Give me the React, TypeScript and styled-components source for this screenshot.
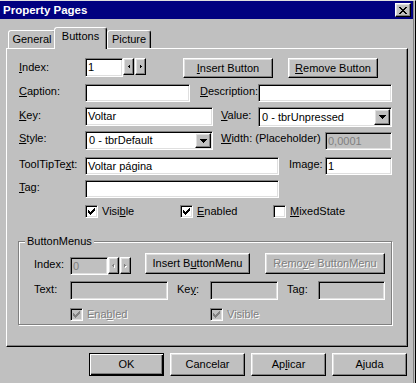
import styled, { createGlobalStyle, css } from 'styled-components';

const GlobalStyle = createGlobalStyle`
  html, body {
    margin: 0;
    padding: 0;
    background: #c0c0c0;
  }
  body {
    font-family: "Liberation Sans", Arial, sans-serif;
    font-size: 11px;
    line-height: 13px;
    color: #000;
  }
  *, *::before, *::after {
    box-sizing: border-box;
  }
  u {
    text-decoration: underline;
    text-underline-offset: 1px;
  }
`;

const raised = css`
  border: 1px solid;
  border-color: #fff #000 #000 #fff;
  box-shadow: inset -1px -1px 0 #808080, inset 1px 1px 0 #dfdfdf;
  background: #c0c0c0;
`;

const sunken = css`
  border: 1px solid;
  border-color: #808080 #fff #fff #808080;
  box-shadow: inset 1px 1px 0 #000, inset -1px -1px 0 #dfdfdf;
`;

const disabledText = css`
  color: #808080;
  text-shadow: 1px 1px 0 #fff;
`;

// pixel glyphs
const CLOSE_X =
  'M0 0h2v1H0zM6 0h2v1H6zM1 1h2v1H1zM5 1h2v1H5zM2 2h4v1H2zM3 3h2v1H3zM2 4h4v1H2zM1 5h2v1H1zM5 5h2v1H5zM0 6h2v1H0zM6 6h2v1H6z';
const CHECK =
  'M0 2h1v3H0zM1 3h1v3H1zM2 4h1v3H2zM3 3h1v3H3zM4 2h1v3H4zM5 1h1v3H5zM6 0h1v3H6z';
const DOWN = 'M0 0h7v1H0zM1 1h5v1H1zM2 2h3v1H2zM3 3h1v1H3z';
const LEFT = 'M1 0h1v3H1zM0 1h1v1H0z';
const RIGHT = 'M0 0h1v3H0zM1 1h1v1H1z';

const Glyph = ({ d, w, h, disabled }: { d: string; w: number; h: number; disabled?: boolean }) => (
	<svg width={w + (disabled ? 1 : 0)} height={h + (disabled ? 1 : 0)} shapeRendering="crispEdges">
		{disabled && <path d={d} fill="#fff" transform="translate(1 1)" />}
		<path d={d} fill={disabled ? '#808080' : '#000'} />
	</svg>
);

const Window = styled.div`
	width: 416px;
	height: 383px;
	background: #c0c0c0;
	border-top: 1px solid #dfdfdf;
	border-right: 1px solid #000;
	padding-right: 1px;
	overflow: hidden;
`;

const Frame = styled.div`
	height: 100%;
	border-right: 1px solid #808080;
`;

const TitleBar = styled.div`
	height: 18px;
	background: #000080;
	display: flex;
	align-items: center;
	justify-content: space-between;
	padding: 0 2px 0 3px;
`;

const Title = styled.span`
	color: #fff;
	font-weight: bold;
	font-size: 11.5px;
`;

const CloseButton = styled.button`
	${raised};
	width: 16px;
	height: 14px;
	padding: 0;
	display: flex;
	align-items: center;
	justify-content: center;
`;

const TabStrip = styled.div`
	display: flex;
	align-items: flex-end;
	height: 21px;
	margin-top: 8px;
	padding-left: 8px;
`;

const Tab = styled.div<{ $w: number; $active?: boolean }>`
	width: ${(p) => p.$w}px;
	height: 18px;
	border: 1px solid;
	border-bottom: none;
	border-color: #fff #000 transparent #fff;
	border-radius: 3px 3px 0 0;
	box-shadow: inset -1px 0 0 #808080;
	background: #c0c0c0;
	text-align: center;
	padding-top: 2px;
	flex-shrink: 0;
	${(p) =>
		p.$active &&
		css`
			height: 22px;
			margin: 0 0 -1px -2px;
			position: relative;
			z-index: 1;
		`}
`;

const Panel = styled.div`
	margin-left: 6px;
	width: 402px;
	height: 299px;
	border: 1px solid;
	border-color: #fff #000 #000 #fff;
	box-shadow: inset -1px -1px 0 #808080;
	padding: 9px 0 0 11px;
`;

const Row = styled.div<{ $mt: number; $h: number; $indent?: number }>`
	display: flex;
	align-items: flex-start;
	margin-top: ${(p) => p.$mt}px;
	height: ${(p) => p.$h}px;
	padding-left: ${(p) => p.$indent ?? 0}px;
`;

const Label = styled.span<{ $w: number; $ml?: number; $mt?: number }>`
	width: ${(p) => p.$w}px;
	margin-left: ${(p) => p.$ml ?? 0}px;
	margin-top: ${(p) => p.$mt ?? 0}px;
	padding: 1px 0 0 1px;
	flex-shrink: 0;
	white-space: nowrap;
`;

const TextBox = styled.div<{ $w: number; $h: number; $disabled?: boolean; $mt?: number }>`
	${sunken};
	width: ${(p) => p.$w}px;
	height: ${(p) => p.$h}px;
	margin-top: ${(p) => p.$mt ?? 0}px;
	flex-shrink: 0;
	background: ${(p) => (p.$disabled ? '#c0c0c0' : '#fff')};
	color: ${(p) => (p.$disabled ? '#808080' : '#000')};
	display: flex;
	align-items: center;
	padding-left: 2px;
	white-space: nowrap;
	overflow: hidden;
`;

const Combo = styled.div<{ $w: number; $h: number }>`
	${sunken};
	width: ${(p) => p.$w}px;
	height: ${(p) => p.$h}px;
	flex-shrink: 0;
	background: #fff;
	display: flex;
	align-items: center;
	padding-left: 3px;
	white-space: nowrap;
`;

const ComboText = styled.span`
	flex: 1;
`;

const DropButton = styled.span`
	${raised};
	width: 16px;
	align-self: stretch;
	margin: 1px;
	display: flex;
	align-items: center;
	justify-content: center;
`;

const Spins = styled.div<{ $mt?: number }>`
	display: flex;
	gap: 1px;
	margin-top: ${(p) => p.$mt ?? 0}px;
	flex-shrink: 0;
`;

const SpinButton = styled.span`
	${raised};
	width: 11px;
	height: 17px;
	display: flex;
	align-items: center;
	justify-content: center;
`;

const Button = styled.button<{ $w: number; $h: number; $ml?: number; $default?: boolean }>`
	${raised};
	width: ${(p) => p.$w}px;
	height: ${(p) => p.$h}px;
	margin-left: ${(p) => p.$ml ?? 0}px;
	padding: 0;
	font: inherit;
	color: #000;
	flex-shrink: 0;
	white-space: nowrap;
	&:disabled {
		${disabledText};
	}
	${(p) =>
		p.$default &&
		css`
			border-color: #000;
			box-shadow: inset 1px 1px 0 #fff, inset -1px -1px 0 #000, inset -2px -2px 0 #808080;
		`}
`;

const CheckItem = styled.span<{ $w?: number; $disabled?: boolean }>`
	display: flex;
	align-items: center;
	gap: 4px;
	height: 13px;
	width: ${(p) => (p.$w ? `${p.$w}px` : 'auto')};
	flex-shrink: 0;
	white-space: nowrap;
	${(p) => p.$disabled && disabledText};
`;

const CheckBox = styled.span<{ $disabled?: boolean }>`
	${sunken};
	width: 13px;
	height: 13px;
	flex-shrink: 0;
	display: flex;
	align-items: center;
	justify-content: center;
	background: ${(p) => (p.$disabled ? '#c0c0c0' : '#fff')};
	text-shadow: none;
`;

const GroupBox = styled.fieldset`
	margin: 17px 0 0 0;
	padding: 0;
	min-width: 0;
	width: 374px;
	height: 90px;
	border: 1px solid #808080;
	box-shadow: 1px 1px 0 #fff, inset 1px 1px 0 #fff;
`;

const GroupTitle = styled.legend`
	margin-left: 6px;
	padding: 0 2px;
	background: #c0c0c0;
	line-height: 13px;
`;

const GroupBody = styled.div`
	padding: 5px 0 0 14px;
`;

const ButtonBar = styled.div`
	display: flex;
	justify-content: flex-end;
	gap: 6px;
	margin-top: 6px;
	padding-right: 6px;
`;

const Check = ({ on, disabled }: { on?: boolean; disabled?: boolean }) => (
	<CheckBox $disabled={disabled}>
		{on && (
			<svg width="7" height="7" shapeRendering="crispEdges">
				<path d={CHECK} fill={disabled ? '#808080' : '#000'} />
			</svg>
		)}
	</CheckBox>
);

const Spinner = ({ disabled, mt }: { disabled?: boolean; mt?: number }) => (
	<Spins $mt={mt}>
		<SpinButton>
			<Glyph d={LEFT} w={2} h={3} disabled={disabled} />
		</SpinButton>
		<SpinButton>
			<Glyph d={RIGHT} w={2} h={3} disabled={disabled} />
		</SpinButton>
	</Spins>
);

const DropDown = ({ w, h, value }: { w: number; h: number; value: string }) => (
	<Combo $w={w} $h={h}>
		<ComboText>{value}</ComboText>
		<DropButton>
			<Glyph d={DOWN} w={7} h={4} />
		</DropButton>
	</Combo>
);

export default function App() {
	return (
		<>
			<GlobalStyle />
			<Window>
				<Frame>
					<TitleBar>
						<Title>Property Pages</Title>
						<CloseButton aria-label="Close">
							<Glyph d={CLOSE_X} w={8} h={7} />
						</CloseButton>
					</TitleBar>

					<TabStrip>
						<Tab $w={48}>General</Tab>
						<Tab $w={53} $active>
							Buttons
						</Tab>
						<Tab $w={44}>Picture</Tab>
					</TabStrip>

					<Panel>
						<Row $mt={0} $h={20}>
							<Label $w={67} $mt={2}>
								<u>I</u>ndex:
							</Label>
							<TextBox $w={38} $h={19}>
								1
							</TextBox>
							<Spinner />
							<Button $w={90} $h={20} $ml={37}>
								<u>I</u>nsert Button
							</Button>
							<Button $w={90} $h={20} $ml={15}>
								<u>R</u>emove Button
							</Button>
						</Row>

						<Row $mt={6} $h={18}>
							<Label $w={67}>
								<u>C</u>aption:
							</Label>
							<TextBox $w={105} $h={18} />
							<Label $w={59} $ml={9}>
								<u>D</u>escription:
							</Label>
							<TextBox $w={134} $h={18} />
						</Row>

						<Row $mt={5} $h={20}>
							<Label $w={67} $mt={1}>
								<u>K</u>ey:
							</Label>
							<TextBox $w={128} $h={19}>
								Voltar
							</TextBox>
							<Label $w={38} $ml={7} $mt={1}>
								<u>V</u>alue:
							</Label>
							<DropDown w={134} h={20} value="0 - tbrUnpressed" />
						</Row>

						<Row $mt={4} $h={19}>
							<Label $w={67}>
								<u>S</u>tyle:
							</Label>
							<DropDown w={128} h={19} value="0 - tbrDefault" />
							<Label $w={105} $ml={7}>
								<u>W</u>idth: (Placeholder)
							</Label>
							<TextBox $w={67} $h={18} $mt={1} $disabled>
								0,0001
							</TextBox>
						</Row>

						<Row $mt={7} $h={18}>
							<Label $w={67}>
								ToolTipTe<u>x</u>t:
							</Label>
							<TextBox $w={194} $h={18}>
								Voltar página
							</TextBox>
							<Label $w={37} $ml={9}>
								Image:
							</Label>
							<TextBox $w={67} $h={18}>
								1
							</TextBox>
						</Row>

						<Row $mt={5} $h={18}>
							<Label $w={67}>
								<u>T</u>ag:
							</Label>
							<TextBox $w={194} $h={18} />
						</Row>

						<Row $mt={7} $h={13} $indent={67}>
							<CheckItem $w={95}>
								<Check on />
								<span>
									Visi<u>b</u>le
								</span>
							</CheckItem>
							<CheckItem $w={93}>
								<Check on />
								<span>
									<u>E</u>nabled
								</span>
							</CheckItem>
							<CheckItem>
								<Check />
								<span>
									<u>M</u>ixedState
								</span>
							</CheckItem>
						</Row>

						<GroupBox>
							<GroupTitle>ButtonMenus</GroupTitle>
							<GroupBody>
								<Row $mt={0} $h={21}>
									<Label $w={37} $mt={4}>
										Index:
									</Label>
									<TextBox $w={38} $h={18} $mt={4} $disabled>
										0
									</TextBox>
									<Spinner disabled mt={4} />
									<Button $w={105} $h={21} $ml={14}>
										Insert B<u>u</u>ttonMenu
									</Button>
									<Button $w={120} $h={21} $ml={15} disabled>
										Remo<u>v</u>e ButtonMenu
									</Button>
								</Row>

								<Row $mt={7} $h={19}>
									<Label $w={37} $mt={1}>
										Text:
									</Label>
									<TextBox $w={98} $h={19} $disabled />
									<Label $w={34} $ml={8} $mt={1}>
										Ke<u>y</u>:
									</Label>
									<TextBox $w={68} $h={19} $disabled />
									<Label $w={32} $ml={8} $mt={1}>
										Tag:
									</Label>
									<TextBox $w={67} $h={19} $disabled />
								</Row>

								<Row $mt={8} $h={13} $indent={37}>
									<CheckItem $w={140} $disabled>
										<Check on disabled />
										<span>
											Ena<u>b</u>led
										</span>
									</CheckItem>
									<CheckItem $disabled>
										<Check on disabled />
										<span>Visible</span>
									</CheckItem>
								</Row>
							</GroupBody>
						</GroupBox>
					</Panel>

					<ButtonBar>
						<Button $w={75} $h={23} $default>
							OK
						</Button>
						<Button $w={75} $h={23}>
							Cancelar
						</Button>
						<Button $w={75} $h={23}>
							Ap<u>l</u>icar
						</Button>
						<Button $w={75} $h={23}>
							Ajuda
						</Button>
					</ButtonBar>
				</Frame>
			</Window>
		</>
	);
}
